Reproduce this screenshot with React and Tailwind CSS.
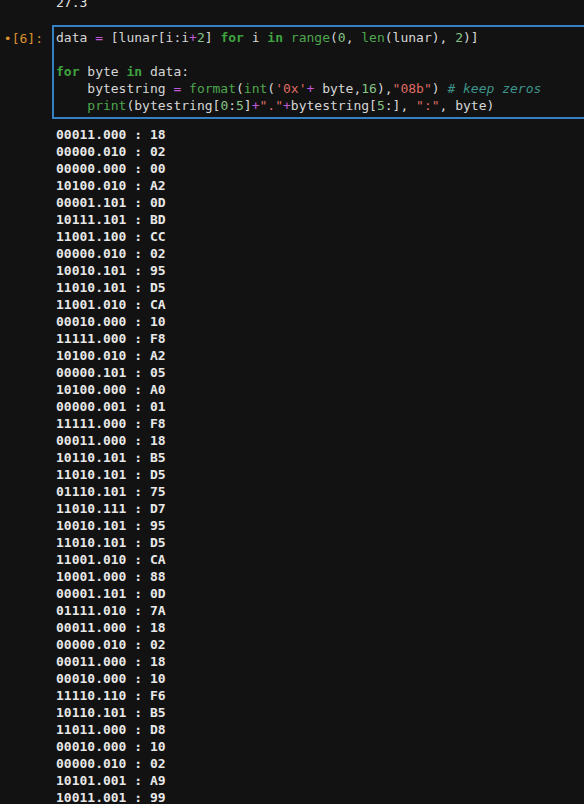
import React from 'react';

const rows = [
  ['00011.000', '18'], ['00000.010', '02'], ['00000.000', '00'], ['10100.010', 'A2'],
  ['00001.101', '0D'], ['10111.101', 'BD'], ['11001.100', 'CC'], ['00000.010', '02'],
  ['10010.101', '95'], ['11010.101', 'D5'], ['11001.010', 'CA'], ['00010.000', '10'],
  ['11111.000', 'F8'], ['10100.010', 'A2'], ['00000.101', '05'], ['10100.000', 'A0'],
  ['00000.001', '01'], ['11111.000', 'F8'], ['00011.000', '18'], ['10110.101', 'B5'],
  ['11010.101', 'D5'], ['01110.101', '75'], ['11010.111', 'D7'], ['10010.101', '95'],
  ['11010.101', 'D5'], ['11001.010', 'CA'], ['10001.000', '88'], ['00001.101', '0D'],
  ['01111.010', '7A'], ['00011.000', '18'], ['00000.010', '02'], ['00011.000', '18'],
  ['00010.000', '10'], ['11110.110', 'F6'], ['10110.101', 'B5'], ['11011.000', 'D8'],
  ['00010.000', '10'], ['00000.010', '02'], ['10101.001', 'A9'], ['10011.001', '99'],
];

// token helpers
const Op = ({ children }) => <span className="text-[#c05ad8]">{children}</span>;
const Kw = ({ children }) => <span className="font-bold text-[#3fa33f]">{children}</span>;
const Fn = ({ children }) => <span className="text-[#4ea64e]">{children}</span>;
const Num = ({ children }) => <span className="text-[#86c486]">{children}</span>;
const Str = ({ children }) => <span className="text-[#df6b63]">{children}</span>;

const App = () => {
  return (
    <div
      className="min-h-[804px] w-[584px] overflow-hidden bg-[#121212] text-[13px] leading-[17px] text-[#d6d6d6]"
      style={{ fontFamily: '"DejaVu Sans Mono", "Liberation Mono", monospace' }}
    >
      {/* previous cell output */}
      <div className="-mt-[6px] pl-[56px] whitespace-pre text-[#e4e4e4]">27.3</div>

      {/* code cell */}
      <div className="mt-[14px] flex">
        <div className="w-[52px] shrink-0 pt-[5px] pr-[9px] text-right text-[#d9922e]">•[6]:</div>
        <div className="min-w-0 flex-1 border-t-2 border-b-2 border-l-2 border-solid border-[#3480c2] pl-[2px] pt-[2px] pb-[3px] whitespace-pre">
          <div>
            data <Op>=</Op> [lunar[i:i<Op>+</Op><Num>2</Num>] <Kw>for</Kw> i <Kw>in</Kw> <Fn>range</Fn>(<Num>0</Num>, <Fn>len</Fn>(lunar), <Num>2</Num>)]
          </div>
          <div>&nbsp;</div>
          <div>
            <Kw>for</Kw> byte <Kw>in</Kw> data:
          </div>
          <div>
            {'    '}bytestring <Op>=</Op> <Fn>format</Fn>(<Fn>int</Fn>(<Str>'0x'</Str><Op>+</Op> byte,<Num>16</Num>),<Str>"08b"</Str>) <span className="italic text-[#3d948a]"># keep zeros</span>
          </div>
          <div>
            {'    '}<Fn>print</Fn>(bytestring[<Num>0</Num>:<Num>5</Num>]<Op>+</Op><Str>"."</Str><Op>+</Op>bytestring[<Num>5</Num>:], <Str>":"</Str>, byte)
          </div>
        </div>
      </div>

      {/* output */}
      <div className="mt-[7px] pl-[56px] font-bold text-[#e8e8e8] whitespace-pre">
        {rows.map(([bits, hex], i) => (
          <div key={i}>
            {bits} : {hex}
          </div>
        ))}
      </div>
    </div>
  );
};

export default App;
